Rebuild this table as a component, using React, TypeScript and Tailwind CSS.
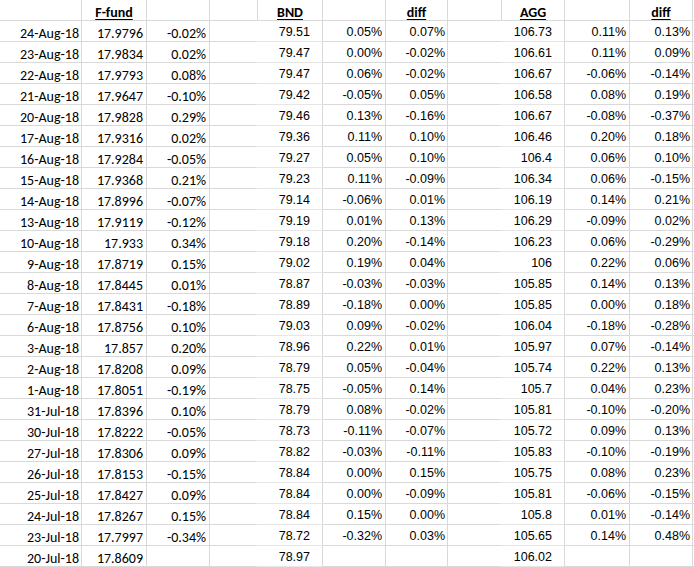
import React from "react"

type Col = {
  w: string
  font: "cal" | "arial"
  pad: string
  noRight?: boolean
  fill?: boolean
}

// column widths include the 1px right gridline
const cols: Col[] = [
  { w: "w-[82px]", font: "cal", pad: "pr-[2px]" },
  { w: "w-[65px]", font: "cal", pad: "pr-[3px]" },
  { w: "w-[63px]", font: "cal", pad: "pr-[3px]" },
  { w: "w-[48px]", font: "cal", pad: "pr-[3px]", noRight: true },
  { w: "w-[65px]", font: "arial", pad: "pr-[12px]", fill: true },
  { w: "w-[63px]", font: "arial", pad: "pr-[3px]" },
  { w: "w-[62px]", font: "arial", pad: "pr-[2px]" },
  { w: "w-[54px]", font: "arial", pad: "pr-[3px]", noRight: true },
  { w: "w-[63px]", font: "arial", pad: "pr-[12px]", fill: true },
  { w: "w-[65px]", font: "arial", pad: "pr-[3px]" },
  { w: "w-[63px]", font: "arial", pad: "pr-[2px]" },
]

const headers = ["", "F-fund", "", "", "BND", "", "diff", "", "AGG", "", "diff"]

const rows: string[][] = [
  ["24-Aug-18", "17.9796", "-0.02%", "", "79.51", "0.05%", "0.07%", "", "106.73", "0.11%", "0.13%"],
  ["23-Aug-18", "17.9834", "0.02%", "", "79.47", "0.00%", "-0.02%", "", "106.61", "0.11%", "0.09%"],
  ["22-Aug-18", "17.9793", "0.08%", "", "79.47", "0.06%", "-0.02%", "", "106.67", "-0.06%", "-0.14%"],
  ["21-Aug-18", "17.9647", "-0.10%", "", "79.42", "-0.05%", "0.05%", "", "106.58", "0.08%", "0.19%"],
  ["20-Aug-18", "17.9828", "0.29%", "", "79.46", "0.13%", "-0.16%", "", "106.67", "-0.08%", "-0.37%"],
  ["17-Aug-18", "17.9316", "0.02%", "", "79.36", "0.11%", "0.10%", "", "106.46", "0.20%", "0.18%"],
  ["16-Aug-18", "17.9284", "-0.05%", "", "79.27", "0.05%", "0.10%", "", "106.4", "0.06%", "0.10%"],
  ["15-Aug-18", "17.9368", "0.21%", "", "79.23", "0.11%", "-0.09%", "", "106.34", "0.06%", "-0.15%"],
  ["14-Aug-18", "17.8996", "-0.07%", "", "79.14", "-0.06%", "0.01%", "", "106.19", "0.14%", "0.21%"],
  ["13-Aug-18", "17.9119", "-0.12%", "", "79.19", "0.01%", "0.13%", "", "106.29", "-0.09%", "0.02%"],
  ["10-Aug-18", "17.933", "0.34%", "", "79.18", "0.20%", "-0.14%", "", "106.23", "0.06%", "-0.29%"],
  ["9-Aug-18", "17.8719", "0.15%", "", "79.02", "0.19%", "0.04%", "", "106", "0.22%", "0.06%"],
  ["8-Aug-18", "17.8445", "0.01%", "", "78.87", "-0.03%", "-0.03%", "", "105.85", "0.14%", "0.13%"],
  ["7-Aug-18", "17.8431", "-0.18%", "", "78.89", "-0.18%", "0.00%", "", "105.85", "0.00%", "0.18%"],
  ["6-Aug-18", "17.8756", "0.10%", "", "79.03", "0.09%", "-0.02%", "", "106.04", "-0.18%", "-0.28%"],
  ["3-Aug-18", "17.857", "0.20%", "", "78.96", "0.22%", "0.01%", "", "105.97", "0.07%", "-0.14%"],
  ["2-Aug-18", "17.8208", "0.09%", "", "78.79", "0.05%", "-0.04%", "", "105.74", "0.22%", "0.13%"],
  ["1-Aug-18", "17.8051", "-0.19%", "", "78.75", "-0.05%", "0.14%", "", "105.7", "0.04%", "0.23%"],
  ["31-Jul-18", "17.8396", "0.10%", "", "78.79", "0.08%", "-0.02%", "", "105.81", "-0.10%", "-0.20%"],
  ["30-Jul-18", "17.8222", "-0.05%", "", "78.73", "-0.11%", "-0.07%", "", "105.72", "0.09%", "0.13%"],
  ["27-Jul-18", "17.8306", "0.09%", "", "78.82", "-0.03%", "-0.11%", "", "105.83", "-0.10%", "-0.19%"],
  ["26-Jul-18", "17.8153", "-0.15%", "", "78.84", "0.00%", "0.15%", "", "105.75", "0.08%", "0.23%"],
  ["25-Jul-18", "17.8427", "0.09%", "", "78.84", "0.00%", "-0.09%", "", "105.81", "-0.06%", "-0.15%"],
  ["24-Jul-18", "17.8267", "0.15%", "", "78.84", "0.15%", "0.00%", "", "105.8", "0.01%", "-0.14%"],
  ["23-Jul-18", "17.7997", "-0.34%", "", "78.72", "-0.32%", "0.03%", "", "105.65", "0.14%", "0.48%"],
  ["20-Jul-18", "17.8609", "", "", "78.97", "", "", "", "106.02", "", ""],
]

const calibri = "font-['Carlito','Lato',sans-serif] text-[14px] pt-[5px] leading-[15px]"
const arial = "font-['Liberation_Sans','Arial',sans-serif] text-[12.5px] pt-[3px] leading-[17px]"

function HeaderRow() {
  return (
    <div className="flex h-[21px]">
      {cols.map((c, i) => (
        <div
          key={i}
          className={`${c.w} shrink-0 h-[21px] border-r border-b border-[#d9d9d9] pt-[5px] leading-[15px] text-center font-['Carlito','Lato',sans-serif] text-[14px] font-bold`}
        >
          {headers[i] && <span className="underline underline-offset-[2px]">{headers[i]}</span>}
        </div>
      ))}
      <div className="flex-1 h-[21px] border-b border-[#d9d9d9]" />
    </div>
  )
}

function DataRow({ cells }: { cells: string[] }) {
  return (
    <div className="flex h-[21px]">
      {cols.map((c, i) => (
        <div
          key={i}
          className={`${c.w} shrink-0 h-[21px] border-b ${c.noRight ? "border-r-transparent" : "border-r-[#d9d9d9]"} ${
            c.fill ? "border-b-[#e6e6e6]" : "border-b-[#d9d9d9]"
          } border-r text-right whitespace-nowrap overflow-hidden ${c.pad} ${
            c.font === "cal" ? calibri : arial
          }`}
        >
          {cells[i]}
        </div>
      ))}
      <div className="flex-1 h-[21px] border-b border-[#d9d9d9]" />
    </div>
  )
}

export default function App() {
  return (
    <div className="w-[694px] h-[567px] overflow-hidden bg-white text-black">
      <HeaderRow />
      {rows.map((r, i) => (
        <DataRow key={i} cells={r} />
      ))}
    </div>
  )
}
